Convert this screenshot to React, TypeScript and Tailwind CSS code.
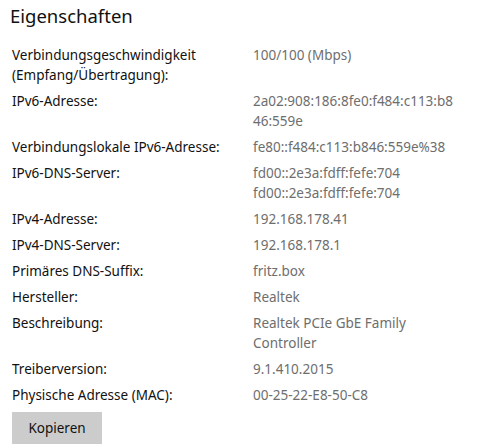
import React from "react";

const rows: { label: React.ReactNode; value: React.ReactNode }[] = [
  {
    label: (
      <>
        Verbindungsgeschwindigkeit
        <br />
        (Empfang/Übertragung):
      </>
    ),
    value: "100/100 (Mbps)",
  },
  {
    label: "IPv6-Adresse:",
    value: (
      <>
        2a02:908:186:8fe0:f484:c113:b8
        <br />
        46:559e
      </>
    ),
  },
  { label: "Verbindungslokale IPv6-Adresse:", value: "fe80::f484:c113:b846:559e%38" },
  {
    label: "IPv6-DNS-Server:",
    value: (
      <>
        fd00::2e3a:fdff:fefe:704
        <br />
        fd00::2e3a:fdff:fefe:704
      </>
    ),
  },
  { label: "IPv4-Adresse:", value: "192.168.178.41" },
  { label: "IPv4-DNS-Server:", value: "192.168.178.1" },
  { label: "Primäres DNS-Suffix:", value: "fritz.box" },
  { label: "Hersteller:", value: "Realtek" },
  {
    label: "Beschreibung:",
    value: (
      <>
        Realtek PCIe GbE Family
        <br />
        Controller
      </>
    ),
  },
  { label: "Treiberversion:", value: "9.1.410.2015" },
  { label: "Physische Adresse (MAC):", value: "00-25-22-E8-50-C8" },
];

export default function App() {
  return (
    <div
      className="w-[478px] h-[445px] bg-white overflow-hidden"
      style={{ fontFamily: '"Noto Sans", "Open Sans", sans-serif' }}
    >
      <h1 className="pl-[10px] pt-[2px] text-[18.5px] leading-[28px] font-normal text-[#111]">
        Eigenschaften
      </h1>
      <div className="mt-[15px] pl-[12px] grid grid-cols-[241px_1fr] gap-y-[6px] text-[13.5px] leading-[20px] whitespace-nowrap">
        {rows.map((r, i) => (
          <React.Fragment key={i}>
            <div className="text-[#111]">{r.label}</div>
            <div className="text-[#6e6e6e]">{r.value}</div>
          </React.Fragment>
        ))}
      </div>
      <button className="mt-[7px] ml-[12px] w-[90px] h-[32px] bg-[#cccccc] text-[13.5px] text-[#111]">
        Kopieren
      </button>
    </div>
  );
}
